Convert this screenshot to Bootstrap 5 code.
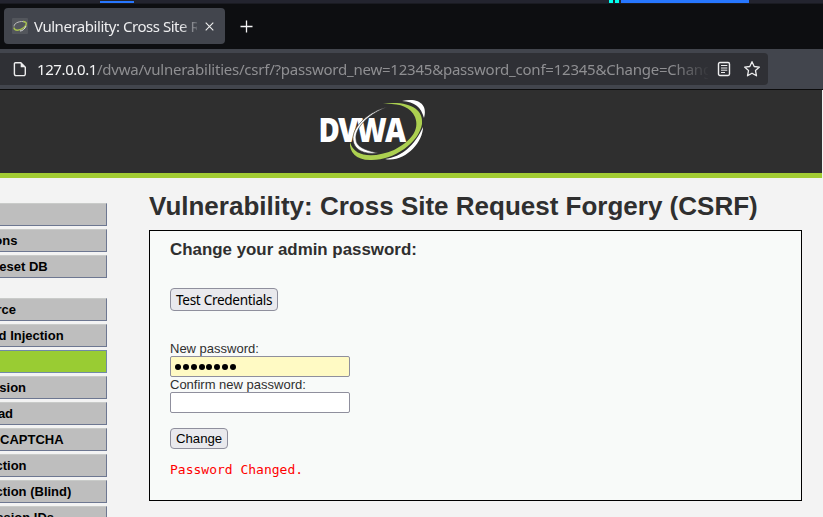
<!DOCTYPE html>
<html lang="en">
<head>
<meta charset="utf-8">
<meta name="viewport" content="width=device-width, initial-scale=1">
<title>Vulnerability: Cross Site Request Forgery (CSRF)</title>
<link rel="stylesheet" href="https://cdn.jsdelivr.net/npm/bootstrap@5.3.0/dist/css/bootstrap.min.css">
<style>
body{height:517px;overflow:hidden;background:#f3f3f3;color:#2f2f2f;font-family:"Liberation Sans",Arial,sans-serif;font-size:13px;line-height:15px}
.desk{height:4px;background:#23242f;border-bottom:1px solid #1a1b22}
.desk-a{width:34px;height:2px;margin:1px 475px 0 100px;background:#2777ff}
.desk-b{width:4px;height:3px;margin-right:2px;background:#0fe}
.desk-c{width:128px;height:3px;background:#2777ff}
.browser{font-family:"Noto Sans",sans-serif}
.tabstrip{height:45px;background:#0d0e11;padding:4px 0 5px 4px}
.browser-tab{width:221px;height:36px;background:#42454d;border-radius:4px;padding:0 11px 0 8px;color:#eeeef0}
.tab-name{width:163px;margin-left:6px;font-size:15px;line-height:22px;letter-spacing:-.46px;-webkit-mask-image:linear-gradient(90deg,#000 146px,transparent 167px);mask-image:linear-gradient(90deg,#000 146px,transparent 167px)}
.toolbar{height:41px;background:#42454d;border-bottom:1px solid #0c0c0d;padding-top:4px}
.address{width:768px;height:32px;background:#2f3035;border-radius:0 4px 4px 0;padding-left:13px}
.url{width:671px;margin-left:10px;font-size:15px;line-height:22px;letter-spacing:-.225px;color:#8f8f92;-webkit-mask-image:linear-gradient(90deg,#000 635px,transparent 673px);mask-image:linear-gradient(90deg,#000 635px,transparent 673px)}
.url span{color:#f4f4f5;letter-spacing:-.4px}
.site{width:822px;height:427px;overflow:hidden}
.banner{height:88px;background:#2f2f2f;border-bottom:5px solid #a2cc33;padding-left:316px;padding-top:6px}
.side{width:107px;padding-top:25px}
.side ul{margin-bottom:20px}
.side li{height:23px;margin-bottom:3px;background:#bebebe;border:solid #6d7791;border-top-color:#c9cbc9;border-width:1px 1px 1px 0;color:#000;font-weight:700;line-height:22px;text-indent:-57px;white-space:nowrap}
.side li:last-child{margin-bottom:0}
.side li.current{background:#9c3;border-color:#7189a8}
.main{padding:12px 20px 0 42px}
h1{font-size:26px;font-weight:700;line-height:32px;margin:0 0 8px;white-space:nowrap}
.vuln{height:271px;background:#f8faf9;border:1px solid #000;padding:9px 20px}
h3{font-size:16.9px;font-weight:700;line-height:20px;margin:0 0 28px}
.key{border:1px solid #8f8f9d;border-radius:4px;background:#e9e9ed;color:#000;padding:0 5px;display:block;white-space:nowrap}
.key-test{height:23px;width:108px;font:13.6px/21px "Noto Sans",sans-serif;margin-bottom:30px;letter-spacing:-.32px}
.key-change{height:21px;width:58px;font-size:13.2px;line-height:19px;margin:15px 0 13px}
.vuln label{display:block;height:15px}
.entry{display:flex;align-items:center;width:180px;height:21px;border:1px solid #8f8f9d;border-radius:2px;background:#fff}
.entry.filled{background:#fffac4;padding-left:4px}
.dots{display:flex;gap:1.85px}
.dots i{width:6px;height:6px;border-radius:50%;background:#000}
pre{font:13px/16px "DejaVu Sans Mono",monospace;color:#f00;margin:0;overflow:visible}
</style>
</head>
<body>
<div class="browser">
  <div class="desk d-flex"><div class="desk-a"></div><div class="desk-b"></div><div class="desk-b"></div><div class="desk-c"></div></div>
  <div class="tabstrip d-flex align-items-start">
    <div class="browser-tab d-flex align-items-center">
      <svg width="16" height="16" viewBox="0 0 16 16" class="flex-shrink-0"><rect width="16" height="16" rx="1" fill="#53565c"/><path d="M2 8.500C2 4.500 9 2.500 13 4" fill="none" stroke="#bbb"/><path d="M11 3.500c4 0 4.500 3 1 6-4 3.500-10 3.500-10 0" fill="none" stroke="#a6bf50" stroke-width="1.500"/><path d="M14 8c-1 3-4 5-6 5" fill="none" stroke="#ddd"/></svg>
      <div class="tab-name overflow-hidden text-nowrap">Vulnerability: Cross Site Request</div>
      <svg width="9" height="9" viewBox="0 0 9 9" class="flex-shrink-0 ms-2"><path d="M.7.7l7.6 7.6M8.3.7L.7 8.3" stroke="#eee" stroke-width="1.1"/></svg>
    </div>
    <svg width="13" height="13" viewBox="0 0 13 13" style="margin:12px 0 0 15px"><path d="M6.5.5v12M.5 6.5h12" stroke="#f4f4f5" stroke-width="1.3"/></svg>
  </div>
  <div class="toolbar">
    <div class="address d-flex align-items-center">
      <svg width="14" height="16" viewBox="0 0 14 16" class="flex-shrink-0"><path d="M2.500 1.700h5.300l4.500 4.500v6.900a1.500 1.500 0 0 1-1.500 1.500H2.900a1.500 1.500 0 0 1-1.500-1.500V2.800a1.100 1.100 0 0 1 1.100-1.100z" fill="none" stroke="#ededee" stroke-width="1.4"/><path d="M7.700 1.500v4.800h4.800z" fill="#ededee"/></svg>
      <div class="url overflow-hidden text-nowrap"><span>127.0.0.1</span>/dvwa/vulnerabilities/csrf/?password_new=12345&amp;password_conf=12345&amp;Change=Change#</div>
      <svg width="14" height="16" viewBox="0 0 14 16" class="flex-shrink-0" style="margin-left:9px"><rect x="1.500" y="1.500" width="11" height="13" rx="1.400" fill="none" stroke="#ededee" stroke-width="1.400"/><path d="M4 4.500h6.300M4 7h6.300M4 9.200h6.300M4 11.500h4" stroke="#ededee"/></svg>
      <svg width="18" height="18" viewBox="0 0 18 18" class="flex-shrink-0" style="margin-left:12px"><path d="M9 1.700l2.200 4.800 5.200.6-3.900 3.500 1 5.200L9 13.200l-4.500 2.600 1-5.200-3.900-3.500 5.200-.6z" fill="none" stroke="#ededee" stroke-width="1.3" stroke-linejoin="round"/></svg>
    </div>
  </div>
</div>
<div class="site">
  <header class="banner">
    <svg width="114" height="70" viewBox="316 96 114 70" class="d-block">
      <path d="M402 101C419 97 428 105 424 118C421 107 415 102 402 101z" fill="#fff"/>
      <path d="M423 127C423 143 404 163 385 159C402 157 415 145 423 127z" fill="#fff"/>
      <path d="M381 104C407 100 424 108 422 124C419 143 393 161 370 160C356 160 349 152 350 142C354 158 375 158 394 150C411 141 420 130 415 117C410 106 398 103 381 104z" fill="#acd050"/>
      <text x="318.500" y="141.500" font-family="Open Sans" font-weight="800" font-size="33" letter-spacing="-2" textLength="86" lengthAdjust="spacingAndGlyphs" fill="#fff">DVWA</text>
      <path d="M387 107C370 111 352 126 353 140C354 149 363 155 378 153C363 150 356 146 356 139C355 128 367 115 387 107z" fill="#fff" stroke="#2f2f2f" stroke-width=".6"/>
    </svg>
  </header>
  <div class="d-flex">
    <nav class="side flex-shrink-0">
      <ul class="list-unstyled"><li>Home</li><li>Instructions</li><li>Setup / Reset DB</li></ul>
      <ul class="list-unstyled"><li>Brute Force</li><li>Command Injection</li><li class="current">CSRF</li><li>File Inclusion</li><li>File Upload</li><li>Insecure CAPTCHA</li><li>SQL Injection</li><li>SQL Injection (Blind)</li><li>Weak Session IDs</li></ul>
    </nav>
    <main class="main flex-grow-1">
      <h1>Vulnerability: Cross Site Request Forgery (CSRF)</h1>
      <section class="vuln">
        <h3>Change your admin password:</h3>
        <button class="key key-test" type="button">Test Credentials</button>
        <label>New password:</label>
        <div class="entry filled"><div class="dots"><i></i><i></i><i></i><i></i><i></i><i></i><i></i><i></i></div></div>
        <label>Confirm new password:</label>
        <div class="entry"></div>
        <button class="key key-change" type="button">Change</button>
        <pre>Password Changed.</pre>
      </section>
    </main>
  </div>
</div>
<script src="https://cdn.jsdelivr.net/npm/bootstrap@5.3.0/dist/js/bootstrap.bundle.min.js"></script>
</body>
</html>
